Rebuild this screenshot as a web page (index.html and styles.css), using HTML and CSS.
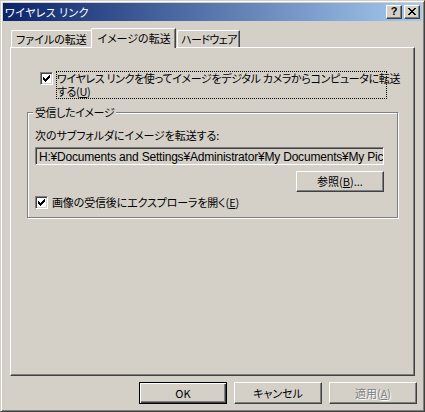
FILE: index.html
```html
<!DOCTYPE html>
<html lang="ja">
<head>
<meta charset="utf-8">
<title>ワイヤレス リンク</title>
<link rel="stylesheet" href="styles.css">
</head>
<body>
<div class="window">
  <div class="titlebar">
    <span class="title-text">ワイヤレス リンク</span>
    <div class="caption-btns">
      <div class="cap-btn help">?</div>
      <div class="cap-btn close">
        <svg width="8" height="7" viewBox="0 0 8 7" shape-rendering="crispEdges">
          <path d="M0 0h2v1H0zM6 0h2v1H6zM1 1h2v1H1zM5 1h2v1H5zM2 2h4v1H2zM3 3h2v1H3zM2 4h4v1H2zM1 5h2v1H1zM5 5h2v1H5zM0 6h2v1H0zM6 6h2v1H6z" fill="#000"/>
        </svg>
      </div>
    </div>
  </div>
  <div class="body">
    <div class="tabs">
      <div class="tab first">ファイルの転送</div>
      <div class="tab selected">イメージの転送</div>
      <div class="tab last">ハードウェア</div>
    </div>
    <div class="panel">
      <div class="check-row top-check">
        <span class="checkbox">
          <svg width="7" height="7" viewBox="0 0 7 7" shape-rendering="crispEdges"><path d="M0 2h1v3H0zM1 3h1v3H1zM2 4h1v3H2zM3 3h1v3H3zM4 2h1v3H4zM5 1h1v3H5zM6 0h1v3H6z" fill="#000"/></svg>
        </span>
        <span class="focus-label">ワイヤレス リンクを使ってイメージをデジタル カメラからコンピュータに転送<br>する(<u>U</u>)</span>
      </div>
      <div class="group">
        <div class="legend">受信したイメージ</div>
        <div class="group-label">次のサブフォルダにイメージを転送する:</div>
        <div class="textbox"><span class="path">H:¥Documents and Settings¥Administrator¥My Documents¥My Pictures</span></div>
        <div class="browse-row">
          <div class="btn browse">参照(<u>B</u>)...</div>
        </div>
        <div class="check-row small-check">
          <span class="checkbox">
            <svg width="7" height="7" viewBox="0 0 7 7" shape-rendering="crispEdges"><path d="M0 2h1v3H0zM1 3h1v3H1zM2 4h1v3H2zM3 3h1v3H3zM4 2h1v3H4zM5 1h1v3H5zM6 0h1v3H6z" fill="#000"/></svg>
          </span>
          <span class="plain-label">画像の受信後にエクスプローラを開く(<u>E</u>)</span>
        </div>
      </div>
    </div>
    <div class="footer">
      <div class="btn default">OK</div>
      <div class="btn">キャンセル</div>
      <div class="btn disabled">適用(<u>A</u>)</div>
    </div>
  </div>
</div>
</body>
</html>
```
FILE: styles.css
```css
html, body {
  margin: 0;
  padding: 0;
  background: #d4d0c8;
}
body {
  font-family: "Noto Sans CJK JP", "Liberation Sans", sans-serif;
  font-size: 11px;
  line-height: 13px;
  font-feature-settings: "palt";
  color: #000;
}
.window {
  width: 425px;
  height: 412px;
  box-sizing: border-box;
  background: #d4d0c8;
  border: 1px solid;
  border-color: #d4d0c8 #404040 #404040 #d4d0c8;
  box-shadow: inset 1px 1px #fff, inset -1px -1px #808080;
  padding: 2px;
  display: flex;
  flex-direction: column;
}
.titlebar {
  height: 18px;
  background: linear-gradient(to right, #0a246a, #a6caf0);
  display: flex;
  align-items: center;
  justify-content: space-between;
  padding-left: 2px;
  color: #fff;
}
.title-text {
  letter-spacing: 0.4px;
}
.caption-btns {
  display: flex;
  gap: 2px;
  margin-right: 2px;
}
.cap-btn {
  width: 16px;
  height: 14px;
  box-sizing: border-box;
  background: #d4d0c8;
  border: 1px solid;
  border-color: #fff #404040 #404040 #fff;
  box-shadow: inset -1px -1px #808080;
  display: flex;
  align-items: center;
  justify-content: center;
  color: #000;
}
.cap-btn.help {
  font-family: "Liberation Sans", sans-serif;
  font-weight: bold;
  font-size: 11px;
  line-height: 11px;
  padding-bottom: 1px;
}
.cap-btn.close svg {
  display: block;
  margin-bottom: 1px;
}
.body {
  flex: 1;
  display: flex;
  flex-direction: column;
  padding: 7px 0 0 7px;
}
.tabs {
  display: flex;
  height: 20px;
  margin-bottom: -1px;
  padding-left: 1px;
  position: relative;
  z-index: 1;
}
.tab {
  box-sizing: border-box;
  margin-top: 2px;
  height: 17px;
  background: #d4d0c8;
  border-top: 1px solid #fff;
  border-left: 1px solid #fff;
  border-top-left-radius: 2px;
  text-align: center;
  padding-top: 2px;
  white-space: nowrap;
}
.tab.first {
  width: 80px;
}
.tab.selected {
  width: 85px;
  height: 20px;
  margin-top: 0;
  border-right: 1px solid #404040;
  box-shadow: inset -1px 0 #808080;
  padding-top: 3px;
  padding-left: 1px;
}
.tab.last {
  width: 63px;
  margin-left: 1px;
  border-right: 1px solid #404040;
  box-shadow: inset -1px 0 #808080;
  border-top-right-radius: 1px;
  letter-spacing: -0.6px;
  padding-left: 1px;
}
.panel {
  width: 405px;
  height: 329px;
  box-sizing: border-box;
  border: 1px solid;
  border-color: #fff #404040 #404040 #fff;
  box-shadow: inset -1px -1px #808080;
  padding: 23px 0 0 29px;
  display: flex;
  flex-direction: column;
  align-items: flex-start;
}
.check-row {
  display: flex;
  align-items: flex-start;
}
.checkbox {
  width: 13px;
  height: 13px;
  box-sizing: border-box;
  background: #fff;
  border: 1px solid;
  border-color: #808080 #fff #fff #808080;
  box-shadow: inset 1px 1px #404040, inset -1px -1px #d4d0c8;
  display: flex;
  align-items: center;
  justify-content: center;
  flex: none;
}
.top-check .checkbox {
  margin-top: 1px;
}
.focus-label {
  margin-left: 3px;
  width: 331px;
  box-sizing: border-box;
  outline: 1px dotted #000;
  outline-offset: -1px;
  padding: 1px 1px;
  white-space: nowrap;
  letter-spacing: -0.35px;
}
.group {
  margin: 13px 0 0 -13px;
  width: 371px;
  height: 106px;
  box-sizing: border-box;
  border: 1px solid #808080;
  box-shadow: inset 1px 1px #fff, 1px 1px #fff;
  padding: 0 0 0 7px;
  display: flex;
  flex-direction: column;
  align-items: flex-start;
}
.legend {
  margin: -7px 0 0 -2px;
  padding: 0 2px;
  background: #d4d0c8;
  letter-spacing: -0.4px;
}
.group-label {
  margin-top: 10px;
  letter-spacing: -0.1px;
}
.textbox {
  margin-top: 5px;
  width: 349px;
  height: 18px;
  box-sizing: border-box;
  border: 1px solid;
  border-color: #808080 #fff #fff #808080;
  box-shadow: inset 1px 1px #404040, inset -1px -1px #d4d0c8;
  padding: 2px 0 0 3px;
  overflow: hidden;
  white-space: nowrap;
}
.path {
  font-family: "Liberation Sans", "Noto Sans CJK JP", sans-serif;
  font-size: 12px;
  letter-spacing: -0.2px;
}
.browse-row {
  width: 349px;
  display: flex;
  justify-content: flex-end;
  margin-top: 6px;
}
.btn {
  width: 88px;
  height: 21px;
  box-sizing: border-box;
  background: #d4d0c8;
  border: 1px solid;
  border-color: #fff #404040 #404040 #fff;
  box-shadow: inset -1px -1px #808080;
  display: flex;
  align-items: center;
  justify-content: center;
  white-space: nowrap;
}
.small-check {
  margin-top: 4px;
}
.plain-label {
  margin-left: 4px;
  letter-spacing: -0.15px;
}
.footer {
  display: flex;
  justify-content: flex-end;
  gap: 7px;
  padding-right: 5px;
  margin-top: 6px;
}
.footer .btn {
  height: 22px;
}
.btn.default {
  border: 1px solid #000;
  box-shadow: inset 1px 1px #fff, inset -1px -1px #404040, inset -2px -2px #808080;
}
.btn.disabled {
  color: #808080;
  text-shadow: 1px 1px #fff;
}
u {
  text-decoration-thickness: 1px;
  text-underline-offset: 1px;
}
```
